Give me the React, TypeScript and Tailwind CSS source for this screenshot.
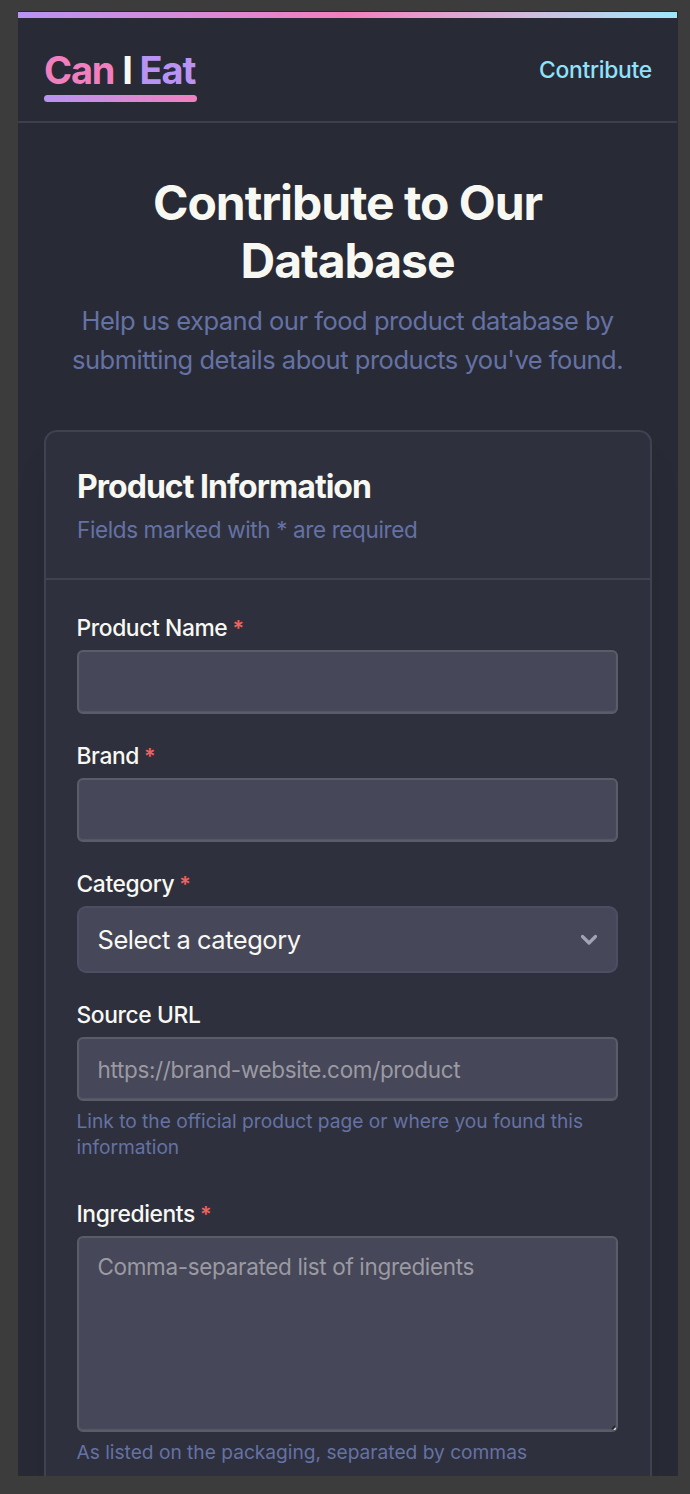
import type { ReactNode } from "react";

function Label({ children, required }: { children: ReactNode; required?: boolean }) {
  return (
    <label className="block h-8 text-[22.8px] leading-8 font-medium tracking-[-0.38px] whitespace-nowrap">
      {children}
      {required && <span className="text-[21.5px] leading-none font-semibold tracking-[-0.4px] text-[#f0625f]"> *</span>}
    </label>
  );
}

function Hint({ children }: { children: ReactNode }) {
  return <p className="mt-[7px] text-[19.2px] leading-[26px] tracking-[-0.02px] whitespace-nowrap text-[#6572a4]">{children}</p>;
}

const control =
  "mt-1.5 block w-full resize-none rounded-[6px] border-2 border-[#5b5c6a] bg-[#464758] px-[19px] text-[22.5px] tracking-[-0.34px] placeholder:text-[#9b9aa2] shadow-[inset_0_-1px_1px_#575866] outline-none";

export default function App() {
  return (
    <div className="h-[1494px] w-[690px] overflow-hidden bg-[#3c3c3c] pt-[11px] pl-[18px] font-['Inter',sans-serif] text-[#f8f8f2]">
      <div className="h-[1465px] w-[660px] overflow-hidden border-t border-r border-t-[#272725] border-r-[#2b2b2d] bg-[#282a36]">
        <div className="h-1.5 bg-linear-to-r from-[#b893f3] via-[#f27fbe] to-[#9ce8fb]" />
        <header className="flex h-[105px] items-start justify-between border-b-2 border-[#3d3f4d] px-[26px] pt-[29px]">
          <div className="w-[152.5px]">
            <div className="text-[38px] leading-[46px] font-bold tracking-[-1.15px] whitespace-nowrap">
              <span className="text-[#f07fbf]">Can</span> I <span className="text-[#b893f3]">Eat</span>
            </div>
            <div className="mt-[2px] h-[6.5px] rounded-full bg-linear-to-r from-[#b893f3] to-[#f07fbf]" />
          </div>
          <a className="-mr-px pt-[7px] text-[22.8px] leading-8 font-medium tracking-[-0.25px] text-[#8fe2fb]">Contribute</a>
        </header>
        <main className="px-[25.5px] pt-[51px]">
          <h1 className="text-center text-[48px] leading-[58px] font-bold tracking-[-1.05px]">
            Contribute to Our
            <br />
            Database
          </h1>
          <p className="mt-[11px] text-center text-[25.5px] leading-[39px] tracking-[-0.48px] whitespace-nowrap text-[#6572a4]">
            Help us expand our food product database by
            <br />
            submitting details about products you've found.
          </p>
          <section className="mt-[51px] h-[1200px] rounded-[13px] border-2 border-[#404252] bg-[#2e303d] shadow-[0_30px_32px_-4px_rgba(0,0,0,0.1)]">
            <div className="h-[148px] border-b-2 border-[#404252] px-[31.5px] pt-[34px]">
              <h2 className="text-[32px] leading-[42px] font-[650] tracking-[-0.97px]">Product Information</h2>
              <p className="mt-[6px] text-[22.5px] leading-8 tracking-[-0.38px] text-[#6572a4]">Fields marked with * are required</p>
            </div>
            <form className="pt-[32px] pr-8 pl-[31px]">
              <Label required>Product Name</Label>
              <input className={`${control} h-16`} />
              <div className="mt-[26px]">
                <Label required>Brand</Label>
                <input className={`${control} h-16`} />
              </div>
              <div className="mt-[26px]">
                <Label required>Category</Label>
                <div className="mt-[6px] flex h-[67px] items-center justify-between rounded-[9px] border-2 border-[#4d4e63] bg-[#464758] pr-[18px] pl-[19px]">
                  <span className="pt-px text-[25.5px] tracking-[-0.48px]">Select a category</span>
                  <svg className="h-[12px] w-[18px]" viewBox="0 0 18 12" fill="none" stroke="#a1a4b2" strokeWidth="3.2" strokeLinecap="round" strokeLinejoin="round">
                    <path d="M2.5 2.5 9 9l6.5-6.5" />
                  </svg>
                </div>
              </div>
              <div className="mt-[26px]">
                <Label>Source URL</Label>
                <input className={`${control} h-16`} placeholder="https://brand-website.com/product" />
                <Hint>
                  Link to the official product page or where you found this
                  <br />
                  information
                </Hint>
              </div>
              <div className="mt-[38px]">
                <Label required>Ingredients</Label>
                <div className="relative">
                  <textarea className={`${control} h-[196px] pt-[12px] leading-[33px]`} placeholder="Comma-separated list of ingredients" />
                  <svg className="absolute right-0.5 bottom-0.5 h-[5px] w-[5px]" viewBox="0 0 5 5">
                    <path d="M1 4 4 1" stroke="#222" strokeWidth="1.5" />
                    <path d="M3 5 5 3" stroke="#ddd" strokeWidth="1.5" />
                  </svg>
                </div>
                <Hint>As listed on the packaging, separated by commas</Hint>
              </div>
            </form>
          </section>
        </main>
      </div>
    </div>
  );
}
